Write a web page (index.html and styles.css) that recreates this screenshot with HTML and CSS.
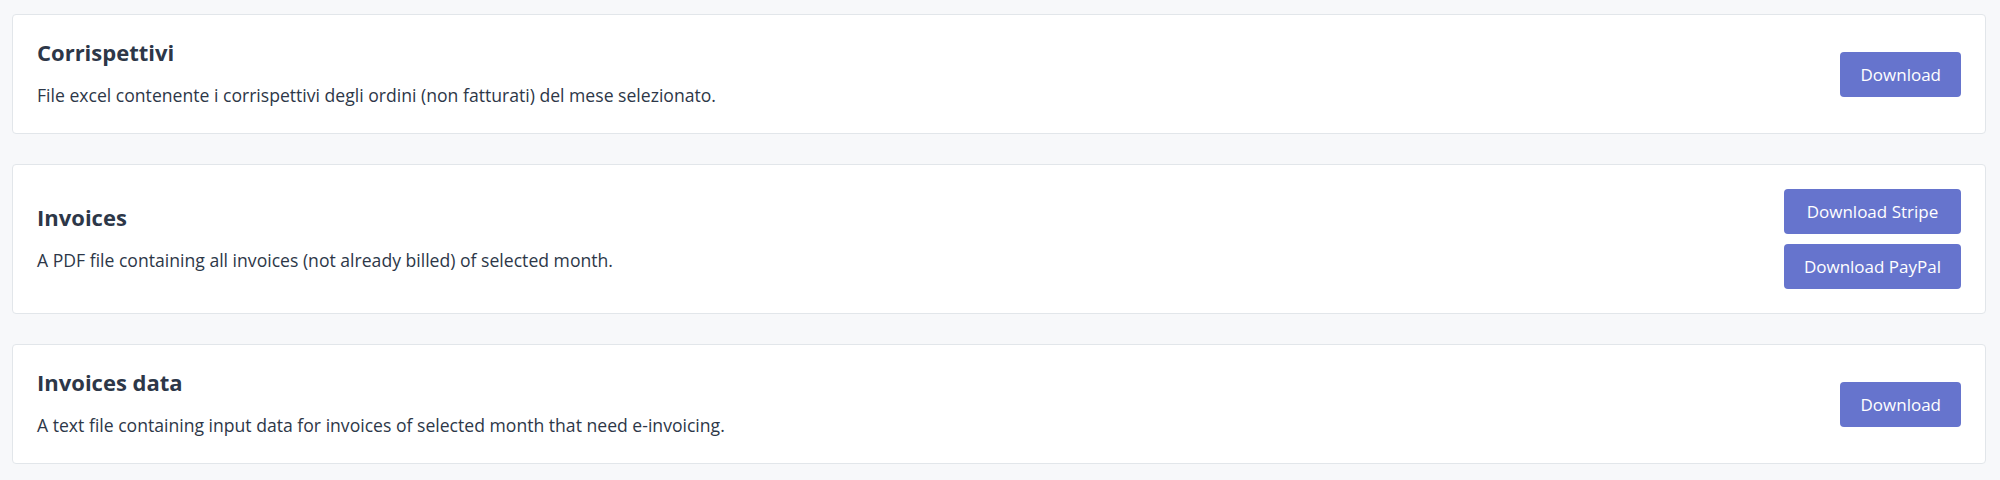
FILE: index.html
```html
<!DOCTYPE html>
<html lang="en">
<head>
  <meta charset="UTF-8">
  <meta name="viewport" content="width=device-width, initial-scale=1.0">
  <title>Exports</title>
  <link rel="stylesheet" href="styles.css">
</head>
<body>
  <div class="exports">
    <div class="export-card">
      <div class="export-info">
        <h2>Corrispettivi</h2>
        <p>File excel contenente i corrispettivi degli ordini (non fatturati) del mese selezionato.</p>
      </div>
      <div class="export-actions">
        <button class="download-button" type="button">Download</button>
      </div>
    </div>

    <div class="export-card">
      <div class="export-info">
        <h2>Invoices</h2>
        <p>A PDF file containing all invoices (not already billed) of selected month.</p>
      </div>
      <div class="export-actions">
        <button class="download-button" type="button">Download Stripe</button>
        <button class="download-button" type="button">Download PayPal</button>
      </div>
    </div>

    <div class="export-card">
      <div class="export-info">
        <h2>Invoices data</h2>
        <p>A text file containing input data for invoices of selected month that need e-invoicing.</p>
      </div>
      <div class="export-actions">
        <button class="download-button" type="button">Download</button>
      </div>
    </div>
  </div>
</body>
</html>
```

FILE: styles.css
```css
body {
  font-family: "Open Sans", Arial, sans-serif;
  margin: 0;
  padding: 0;
  background-color: #f7f8fa;
  color: #2d3748;
}
.exports {
  display: flex;
  flex-direction: column;
  gap: 30px;
  padding: 14px 14px 0 12px;
}
.export-card {
  display: flex;
  justify-content: space-between;
  align-items: center;
  padding: 24px;
  background-color: #fff;
  border: 1px solid #e2e6ea;
  border-radius: 4px;
}
.export-info h2 {
  margin: 0 0 16px;
  font-size: 22px;
  line-height: 26px;
  font-weight: 700;
}
.export-info p {
  margin: 0;
  font-size: 17.6px;
  line-height: 28px;
}
.export-actions {
  display: flex;
  flex-direction: column;
  gap: 10px;
}
.download-button {
  background-color: #6674cd;
  color: white;
  font-family: "Open Sans", Arial, sans-serif;
  font-size: 17px;
  line-height: 25px;
  padding: 10px 20px;
  border: none;
  border-radius: 4px;
  cursor: pointer;
}
.download-button:hover {
  background-color: #5664c0;
}
```
